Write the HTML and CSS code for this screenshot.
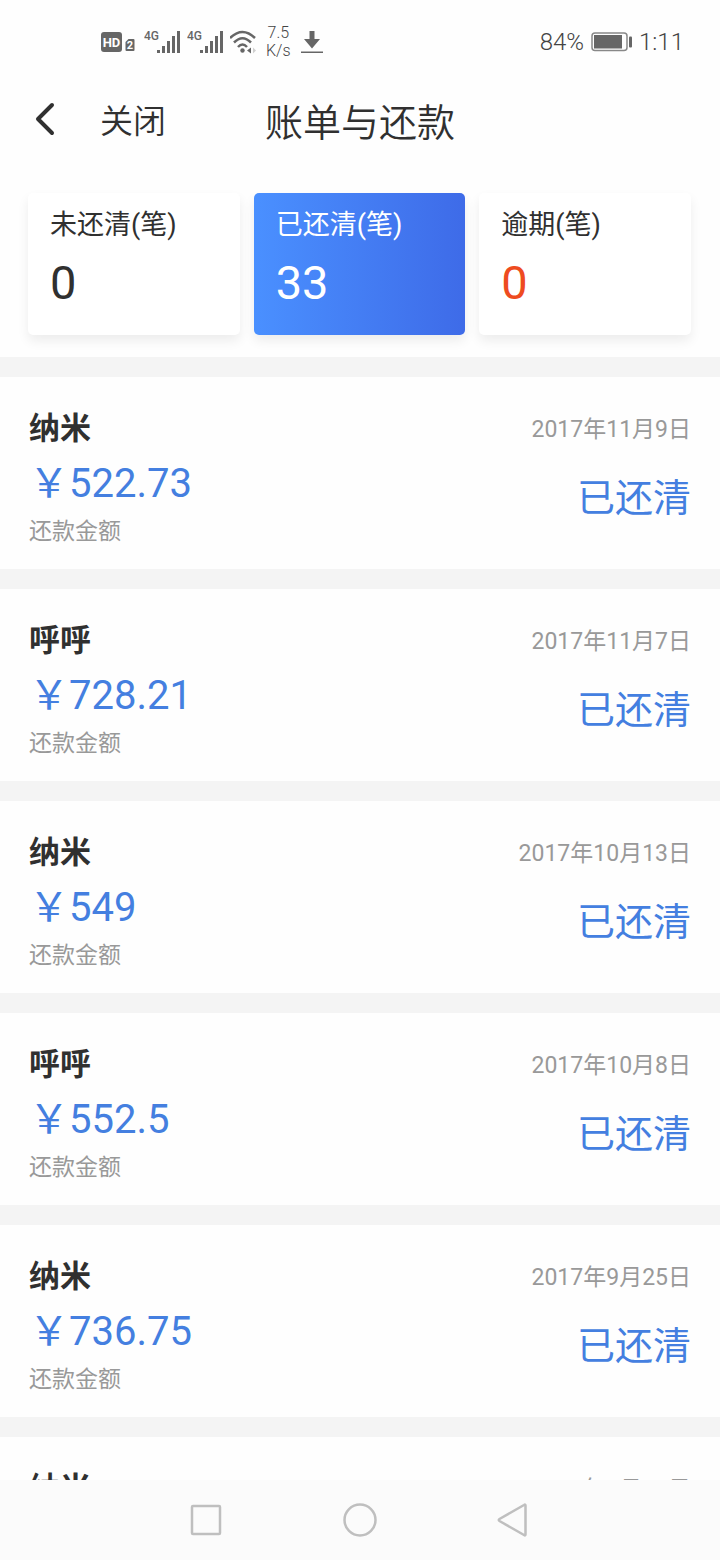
FILE: index.html
```html
<!DOCTYPE html>
<html lang="zh-CN">
<head>
<meta charset="utf-8">
<meta name="viewport" content="width=device-width, initial-scale=1">
<title>账单与还款</title>
<link rel="stylesheet" href="styles.css">
</head>
<body>
<div class="screen">
  <div class="status">
    <div class="status-group">
      <svg class="hd" width="34" height="24" viewBox="0 0 34 24" aria-label="HD 2">
        <rect x="0" y="2" width="21" height="20" rx="3"/>
        <text x="10.500" y="17" class="hd-text">HD</text>
        <path d="M27.500 9h5a1 1 0 0 1 1 1v10a1 1 0 0 1-1 1h-7a1 1 0 0 1-1-1v-8z"/>
        <text x="29" y="19" class="sim-text">2</text>
      </svg>
      <svg width="36" height="24" viewBox="0 0 36 24" aria-label="4G">
        <text x="0" y="10" class="net-text">4G</text>
        <path d="M13 20h3v3h-3zM18 16h3v7h-3zM23 11h3v12h-3zM28 6h3v17h-3zM33 1h3v22h-3z"/>
      </svg>
      <svg width="36" height="24" viewBox="0 0 36 24" aria-label="4G">
        <text x="0" y="10" class="net-text">4G</text>
        <path d="M13 20h3v3h-3zM18 16h3v7h-3zM23 11h3v12h-3zM28 6h3v17h-3zM33 1h3v22h-3z"/>
      </svg>
      <svg width="28" height="24" viewBox="0 0 28 24" aria-label="Wi-Fi">
        <path class="wave" d="M0 8Q12.500-4 25 8M4 12.500Q12.500 4 21 12.500M8 17Q12.500 12 17 17"/>
        <circle cx="12.500" cy="20.500" r="2.200"/>
        <path d="M17 20.500l4-3v6z"/>
        <path class="faint" d="M23 17.500l3 3-3 3z"/>
      </svg>
      <div class="speed"><span>7.5</span><span>K/s</span></div>
      <svg width="22" height="24" viewBox="0 0 22 24" aria-label="下载">
        <path d="M8.500 1h5v8H19l-8 9.500L3 9h5.500zM0 21.500h22V23H0z"/>
      </svg>
    </div>
    <div class="status-side">
      <span>84%</span>
      <svg width="41" height="20" viewBox="0 0 41 20" aria-label="电池">
        <rect class="shell" x="1" y="1" width="35" height="17.500" rx="3"/>
        <rect x="3" y="3" width="28" height="13.500"/>
        <rect x="38" y="4.500" width="3" height="11" rx="1"/>
      </svg>
      <span>1:11</span>
    </div>
  </div>

  <header class="header">
    <button class="back" type="button" aria-label="返回">
      <svg width="20" height="34" viewBox="0 0 20 34"><path d="M17 3L3 17l14 14"/></svg>
    </button>
    <button class="close" type="button">关闭</button>
    <h1 class="title">账单与还款</h1>
  </header>

  <div class="tabs">
    <button class="tab" type="button"><span class="tab-label">未还清(笔)</span><span class="tab-count">0</span></button>
    <button class="tab tab-active" type="button"><span class="tab-label">已还清(笔)</span><span class="tab-count">33</span></button>
    <button class="tab tab-overdue" type="button"><span class="tab-label">逾期(笔)</span><span class="tab-count">0</span></button>
  </div>

  <main class="records">
    <article class="record">
      <div><h2 class="name">纳米</h2><p class="amount">￥522.73</p><p class="caption">还款金额</p></div>
      <div class="record-side"><p class="date">2017年11月9日</p><p class="state">已还清</p></div>
    </article>
    <article class="record">
      <div><h2 class="name">呼呼</h2><p class="amount">￥728.21</p><p class="caption">还款金额</p></div>
      <div class="record-side"><p class="date">2017年11月7日</p><p class="state">已还清</p></div>
    </article>
    <article class="record">
      <div><h2 class="name">纳米</h2><p class="amount">￥549</p><p class="caption">还款金额</p></div>
      <div class="record-side"><p class="date">2017年10月13日</p><p class="state">已还清</p></div>
    </article>
    <article class="record">
      <div><h2 class="name">呼呼</h2><p class="amount">￥552.5</p><p class="caption">还款金额</p></div>
      <div class="record-side"><p class="date">2017年10月8日</p><p class="state">已还清</p></div>
    </article>
    <article class="record">
      <div><h2 class="name">纳米</h2><p class="amount">￥736.75</p><p class="caption">还款金额</p></div>
      <div class="record-side"><p class="date">2017年9月25日</p><p class="state">已还清</p></div>
    </article>
    <article class="record">
      <div><h2 class="name">纳米</h2></div>
      <div class="record-side"><p class="date">2017年9月25日</p></div>
    </article>
  </main>

  <nav class="navbar">
    <button type="button" aria-label="最近任务"><svg width="34" height="34" viewBox="0 0 34 34"><rect x="3" y="3" width="28" height="28" rx="1"/></svg></button>
    <button type="button" aria-label="主页"><svg width="34" height="34" viewBox="0 0 34 34"><circle cx="17" cy="17" r="15.500"/></svg></button>
    <button type="button" aria-label="返回"><svg width="34" height="34" viewBox="0 0 34 34"><path d="M28.500 2.500v29q0 1.500-1.500.500L2.500 18q-1.500-1 0-2L27 2q1.500-1 1.500.500z"/></svg></button>
  </nav>
</div>
</body>
</html>
```
FILE: styles.css
```css
* {
  box-sizing: border-box;
}

body,
h1,
h2,
p {
  margin: 0;
}

body {
  background: #fefefe;
  color: #303030;
  font-family: Roboto, "Noto Sans CJK SC", sans-serif;
}

button {
  padding: 0;
  border: 0;
  background: none;
  color: inherit;
  font: inherit;
}

svg {
  display: block;
  flex: none;
}

.screen {
  display: flex;
  flex-direction: column;
  height: 100vh;
  overflow: hidden;
}

.status {
  display: flex;
  flex: none;
  justify-content: space-between;
  align-items: center;
  height: 84px;
  padding: 0 36px 0 101px;
  color: #444;
  fill: #666;
  font-weight: 300;
}

.status-group {
  display: flex;
  align-items: center;
  gap: 7px;
}

.hd {
  margin-right: 2px;
}

.hd-text,
.sim-text {
  fill: #fff;
  font-size: 13px;
  font-weight: 700;
  text-anchor: middle;
}

.sim-text {
  font-size: 11px;
}

.net-text {
  font-size: 12px;
  font-weight: 500;
}

.wave {
  fill: none;
  stroke: #666;
  stroke-width: 2.5;
}

.faint {
  opacity: 0.3;
}

.speed {
  display: flex;
  flex-direction: column;
  align-items: center;
  margin: 0 3px 0 1px;
  font-size: 16px;
  line-height: 18px;
}

.status-side {
  display: flex;
  align-items: center;
  gap: 7px;
  font-size: 24px;
}

.shell {
  fill: none;
  stroke: #888;
  stroke-width: 1.5;
}

.header {
  display: grid;
  flex: none;
  grid-template-columns: 1fr auto 1fr;
  align-items: center;
  height: 70px;
  font-weight: 350;
}

.back,
.close {
  grid-row: 1;
  grid-column: 1;
  justify-self: start;
}

.back {
  margin-left: 35px;
}

.back path {
  fill: none;
  stroke: #303030;
  stroke-width: 4;
  stroke-linecap: round;
  stroke-linejoin: round;
}

.close {
  margin-left: 100px;
  font-size: 33px;
}

.title {
  grid-row: 1;
  grid-column: 2;
  font-size: 38px;
  font-weight: 350;
}

.tabs {
  display: grid;
  flex: none;
  grid-template-columns: repeat(3, 1fr);
  gap: 14px;
  padding: 39px 29px 22px 28px;
}

.tab {
  display: flex;
  flex-direction: column;
  align-items: flex-start;
  height: 142px;
  padding: 12px 22px;
  border-radius: 5px;
  background: #fff;
  box-shadow: 0 6px 12px rgba(0, 0, 0, 0.07);
}

.tab-active {
  background: linear-gradient(90deg, #4a90ff, #3e6be8);
  color: #fff;
}

.tab-label {
  font-size: 27px;
  line-height: 40px;
}

.tab-count {
  font-size: 47px;
  line-height: 76px;
}

.tab-overdue .tab-count {
  color: #ee4b20;
}

.records {
  flex: 1;
  min-height: 0;
  overflow: hidden;
}

.record {
  display: flex;
  justify-content: space-between;
  padding: 30px 29px 22px;
  border-top: 20px solid #f4f4f4;
}

.record-side {
  text-align: right;
}

.name {
  font-size: 31px;
  font-weight: 700;
  line-height: 44px;
}

.amount {
  color: #447fe0;
  font-size: 40px;
  line-height: 66px;
}

.caption {
  color: #999;
  font-size: 23px;
  line-height: 30px;
}

.date {
  color: #999;
  font-size: 23px;
  line-height: 46px;
}

.state {
  color: #447fe0;
  font-size: 38px;
  line-height: 90px;
}

.navbar {
  display: flex;
  flex: none;
  justify-content: center;
  align-items: center;
  gap: 120px;
  height: 80px;
  background: #fbfbfb;
}

.navbar svg {
  fill: none;
  stroke: #bfbfbf;
  stroke-width: 2.5;
}
```
